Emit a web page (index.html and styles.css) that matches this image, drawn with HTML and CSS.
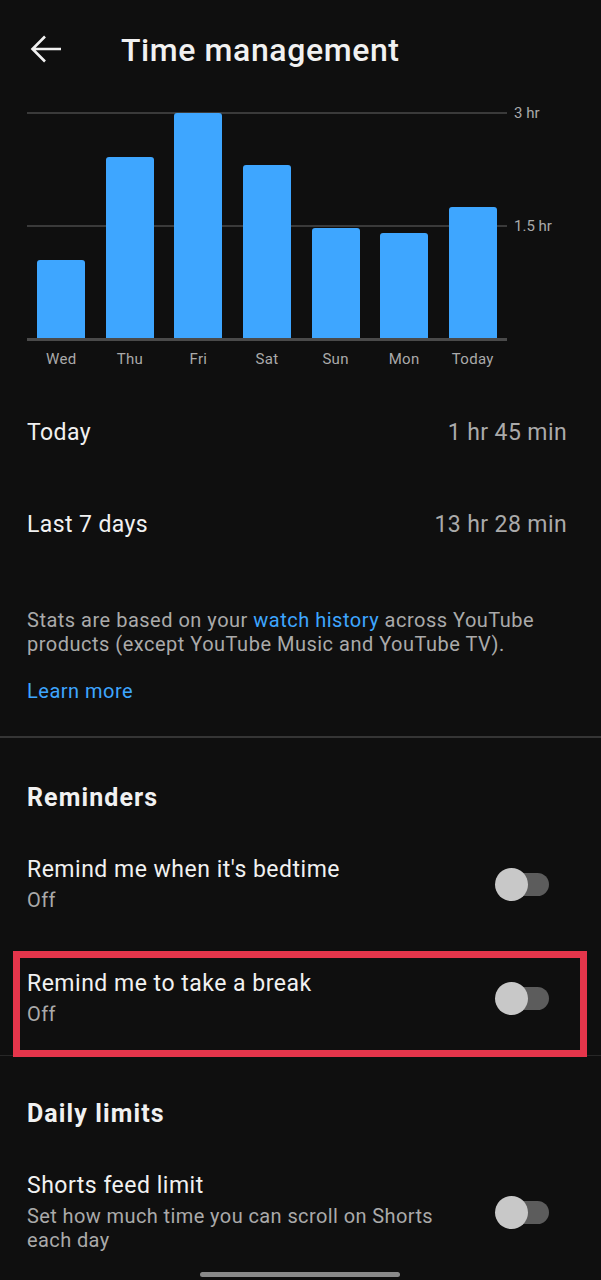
FILE: index.html
```html
<!DOCTYPE html>
<html lang="en">
  <head>
    <meta charset="utf-8" />
    <meta name="viewport" content="width=device-width, initial-scale=1" />
    <title>Time management</title>
    <link rel="stylesheet" href="styles.css">
  </head>
  <body>
    <header class="app-bar">
      <svg class="back-icon" width="32" height="28" viewBox="0 0 32 28" aria-hidden="true">
        <path d="M31 14H2.5M15 1.5L2.5 14L15 26.5" fill="none" stroke="#f1f1f1" stroke-width="2.6" />
      </svg>
      <h1>Time management</h1>
    </header>

    <div class="chart">
      <div class="plot">
        <span class="grid-line top"></span>
        <span class="grid-line mid"></span>
        <span class="axis-label top">3 hr</span>
        <span class="axis-label mid">1.5 hr</span>
        <div class="col"><div class="bar" style="height: 78px"></div></div>
        <div class="col"><div class="bar" style="height: 181px"></div></div>
        <div class="col"><div class="bar" style="height: 225px"></div></div>
        <div class="col"><div class="bar" style="height: 173px"></div></div>
        <div class="col"><div class="bar" style="height: 110px"></div></div>
        <div class="col"><div class="bar" style="height: 105px"></div></div>
        <div class="col"><div class="bar" style="height: 131px"></div></div>
      </div>
      <div class="days">
        <span>Wed</span>
        <span>Thu</span>
        <span>Fri</span>
        <span>Sat</span>
        <span>Sun</span>
        <span>Mon</span>
        <span>Today</span>
      </div>
    </div>

    <div class="stat-row">
      <span>Today</span>
      <span class="stat-value">1 hr 45 min</span>
    </div>
    <div class="stat-row">
      <span>Last 7 days</span>
      <span class="stat-value">13 hr 28 min</span>
    </div>

    <p class="note">
      Stats are based on your <a href="#">watch history</a> across YouTube
      products (except YouTube Music and YouTube TV).
    </p>
    <a class="learn-more" href="#">Learn more</a>

    <hr class="divider" />

    <section class="section">
      <h2>Reminders</h2>
      <div class="setting">
        <div class="setting-text">
          <div class="setting-title">Remind me when it's bedtime</div>
          <div class="setting-sub">Off</div>
        </div>
        <div class="toggle"><span class="thumb"></span><span class="track"></span></div>
      </div>
      <div class="setting highlight">
        <div class="setting-text">
          <div class="setting-title">Remind me to take a break</div>
          <div class="setting-sub">Off</div>
        </div>
        <div class="toggle"><span class="thumb"></span><span class="track"></span></div>
      </div>
    </section>

    <hr class="divider thin" />

    <section class="section">
      <h2>Daily limits</h2>
      <div class="setting">
        <div class="setting-text">
          <div class="setting-title">Shorts feed limit</div>
          <div class="setting-sub">Set how much time you can scroll on Shorts each day</div>
        </div>
        <div class="toggle"><span class="thumb"></span><span class="track"></span></div>
      </div>
    </section>

    <div class="home-indicator"></div>
  </body>
</html>
```

FILE: styles.css
```css
body {
  margin: 0;
  background-color: #0f0f0f;
  color: #f1f1f1;
  font-family: Roboto, "Noto Sans", sans-serif;
  height: 1280px;
  overflow: hidden;
}
a {
  color: #3ea6ff;
  text-decoration: none;
}
.app-bar {
  height: 100px;
  display: flex;
  align-items: center;
  padding-left: 30px;
}
.back-icon {
  display: block;
  margin-top: -2px;
}
.app-bar h1 {
  margin: 0 0 0 59px;
  font-size: 32px;
  font-weight: 500;
  line-height: 38px;
  letter-spacing: 0.6px;
}
.chart {
  padding: 13px 0 19px 27px;
}
.plot {
  position: relative;
  width: 480px;
  height: 225px;
  border-bottom: 3px solid #4a4a4a;
  display: grid;
  grid-template-columns: repeat(7, 1fr);
  align-items: end;
}
.grid-line {
  position: absolute;
  left: 0;
  width: 480px;
  height: 2px;
  background-color: #3a3a3a;
}
.grid-line.top {
  top: -1px;
}
.grid-line.mid {
  top: 112px;
}
.axis-label {
  position: absolute;
  left: 487px;
  font-size: 15px;
  line-height: 18px;
  color: #aaaaaa;
  white-space: nowrap;
}
.axis-label.top {
  top: -9px;
}
.axis-label.mid {
  top: 104px;
}
.col {
  display: flex;
  justify-content: center;
}
.bar {
  position: relative;
  z-index: 1;
  width: 48px;
  background-color: #3ea6ff;
  border-radius: 3px 3px 0 0;
}
.days {
  width: 480px;
  margin-top: 9px;
  display: grid;
  grid-template-columns: repeat(7, 1fr);
  text-align: center;
  font-size: 15px;
  line-height: 18px;
  letter-spacing: 0.3px;
  color: #aaaaaa;
}
.stat-row {
  display: flex;
  justify-content: space-between;
  padding: 32px 34px 32px 27px;
  font-size: 23px;
  line-height: 28px;
  letter-spacing: 0.4px;
}
.stat-value {
  color: #aaaaaa;
}
.note {
  margin: 37px 0 0;
  padding: 0 27px;
  font-size: 20px;
  line-height: 24px;
  letter-spacing: 0.5px;
  color: #aaaaaa;
}
.learn-more {
  display: block;
  margin: 23px 27px 0;
  font-size: 20px;
  line-height: 24px;
  letter-spacing: 0.5px;
  width: max-content;
}
.divider {
  margin: 33px 0 0;
  border: none;
  height: 2px;
  background-color: #353535;
}
.divider.thin {
  margin-top: 0;
  height: 1px;
  background-color: #272727;
}
.section h2 {
  margin: 0;
  padding: 45px 27px 14px;
  font-size: 25px;
  font-weight: 700;
  line-height: 30px;
  letter-spacing: 1.1px;
}
.divider.thin + .section h2 {
  padding-top: 43px;
}
.setting {
  display: flex;
  align-items: center;
  padding: 29px 52px 29px 27px;
}
.setting-text {
  flex: 1;
  max-width: 440px;
}
.setting-title {
  font-size: 23px;
  line-height: 28px;
  letter-spacing: 0.5px;
}
.setting-sub {
  margin-top: 4px;
  font-size: 20px;
  line-height: 24px;
  letter-spacing: 0.4px;
  color: #aaaaaa;
}
.toggle {
  margin-left: auto;
  display: flex;
  align-items: center;
}
.thumb {
  position: relative;
  z-index: 1;
  width: 33px;
  height: 33px;
  border-radius: 50%;
  background-color: #c8c8c8;
}
.track {
  width: 42px;
  height: 23px;
  margin-left: -21px;
  border-radius: 12px;
  background-color: #5c5c5c;
}
.highlight {
  position: relative;
}
.highlight::after {
  content: "";
  position: absolute;
  top: 10px;
  left: 13px;
  right: 14px;
  bottom: -2px;
  border: 7px solid #e5354b;
}
.home-indicator {
  position: fixed;
  left: 200px;
  bottom: 3px;
  width: 200px;
  height: 5px;
  border-radius: 3px;
  background-color: #8a8a8a;
}
```
